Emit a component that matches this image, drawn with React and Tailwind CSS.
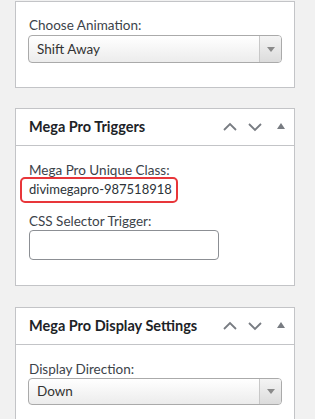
const font = { fontFamily: 'Lato, "Open Sans", sans-serif' };

function SelectBox({ value, className = '' }) {
    return (
        <div className={`flex w-[254px] rounded-[4px] border border-[#aaaaaa] bg-gradient-to-b from-white to-[#ececec] overflow-hidden ${className}`}>
            <div className="flex-1 flex items-center pl-[8px] text-[13.5px] text-[#333]">{value}</div>
            <div className="w-[22px] flex items-center justify-center border-l border-[#c8c8c8] bg-gradient-to-b from-[#f4f4f4] to-[#dcdcdc]">
                <svg width="8" height="5" viewBox="0 0 8 5">
                    <polygon points="0,0 8,0 4,5" fill="#8a8a8a" />
                </svg>
            </div>
        </div>
    );
}

function HeaderIcons() {
    return (
        <div className="flex items-center">
            <svg width="16" height="10" viewBox="0 0 16 10" className="mr-[9px]">
                <polyline points="2,8 8,2 14,8" fill="none" stroke="#787c82" strokeWidth="1.8" />
            </svg>
            <svg width="16" height="10" viewBox="0 0 16 10" className="mr-[14px]">
                <polyline points="2,2 8,8 14,2" fill="none" stroke="#787c82" strokeWidth="1.8" />
            </svg>
            <svg width="8" height="6" viewBox="0 0 8 6" className="mr-[9px] mb-[3px]">
                <polygon points="0,6 8,6 4,0" fill="#787c82" />
            </svg>
        </div>
    );
}

function Panel({ title, children, className = '' }) {
    return (
        <div className={`w-[280px] border border-[#c3c4c7] bg-white ${className}`}>
            {title && (
                <div className="h-[37px] flex items-center justify-between border-b border-[#c3c4c7] pl-[13px]">
                    <span className="text-[14.5px] font-bold text-[#1d2327] whitespace-nowrap">{title}</span>
                    <HeaderIcons />
                </div>
            )}
            {children}
        </div>
    );
}

export default function App() {
    return (
        <div className="w-[315px] h-[419px] overflow-hidden bg-[#f1f1f1] pl-[15px] pt-[1px]" style={font}>
            <Panel className="h-[87px]">
                <div className="pt-[14px] pl-[12px]">
                    <div className="text-[13.5px] leading-[18px] text-[#3c434a] pl-[1px]">Choose Animation:</div>
                    <SelectBox value="Shift Away" className="h-[28px] mt-[1px]" />
                </div>
            </Panel>

            <Panel title="Mega Pro Triggers" className="mt-[20px] h-[178px]">
                <div className="pt-[15px]">
                    <div className="text-[13.5px] leading-[18px] text-[#3c434a] pl-[13px]">Mega Pro Unique Class:</div>
                    <div className="ml-[4px] mt-[-2px] w-[158px] h-[26px] rounded-[5px] border-2 border-[#e8363a] flex items-center pl-[7px] text-[13px] text-[#2c3338] whitespace-nowrap">
                        divimegapro-987518918
                    </div>
                    <div className="text-[13.5px] leading-[18px] text-[#3c434a] pl-[13px] mt-[9px]">CSS Selector Trigger:</div>
                    <div className="ml-[13px] w-[190px] h-[30px] rounded-[4px] border border-[#8c8f94] bg-white"></div>
                </div>
            </Panel>

            <Panel title="Mega Pro Display Settings" className="mt-[21px] h-[140px]">
                <div className="pt-[15px] pl-[12px]">
                    <div className="text-[13.5px] leading-[18px] text-[#3c434a] pl-[1px]">Display Direction:</div>
                    <SelectBox value="Down" className="h-[27px] mt-[0px]" />
                </div>
            </Panel>
        </div>
    );
}
